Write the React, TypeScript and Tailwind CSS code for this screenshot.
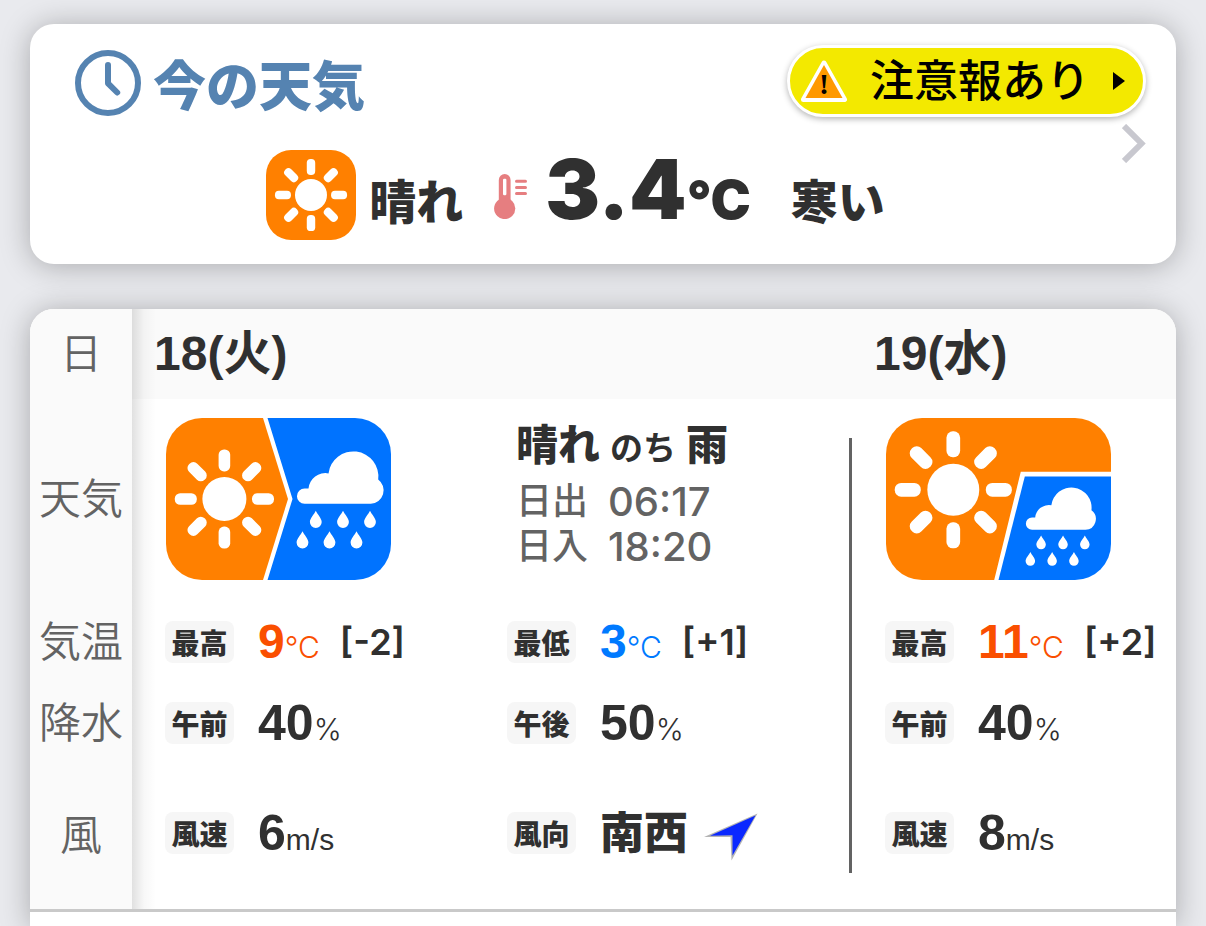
import type { ReactNode } from "react";

const JP = "font-['Noto_Sans_CJK_JP',sans-serif]";
const HELV = "font-['Liberation_Sans','Noto_Sans_CJK_JP',sans-serif]";
const INTER = "font-['Inter','Noto_Sans_CJK_JP',sans-serif]";

const RAY_ANGLES = [0, 45, 90, 135, 180, 225, 270, 315];
const DROPS = [
  [149.8, 92.8],
  [177, 92.8],
  [204, 92.8],
  [136.5, 113.2],
  [163.5, 113.2],
  [190.5, 113.2],
];

function Sun({ x, y, scale }: { x: number; y: number; scale: number }) {
  return (
    <g transform={`translate(${x} ${y}) scale(${scale})`}>
      <circle r="22" fill="#fff" />
      {RAY_ANGLES.map((angle) => (
        <rect
          key={angle}
          x="-5.8"
          y="-49.6"
          width="11.6"
          height="22"
          rx="5.4"
          fill="#fff"
          transform={`rotate(${angle})`}
        />
      ))}
    </g>
  );
}

function RainCloud({ transform }: { transform?: string }) {
  return (
    <g transform={transform} fill="#fff">
      <path d="M138.6 70.5H142.5A17 17 0 0 1 162.5 55.4A25 25 0 1 1 212.2 61.5A13.5 13.5 0 0 1 204.8 85.8H138.6A7.65 7.65 0 0 1 138.6 70.5Z" />
      {DROPS.map(([x, y]) => (
        <path
          key={`${x}-${y}`}
          transform={`translate(${x} ${y})`}
          d="M0 0C1.5 3.4 5.9 7.5 5.9 11.3A5.9 5.9 0 0 1-5.9 11.3C-5.9 7.5-1.5 3.4 0 0Z"
        />
      ))}
    </g>
  );
}

function SunnyIcon() {
  return (
    <svg viewBox="0 0 90 90" className="size-[90px] shrink-0" aria-hidden="true">
      <rect width="90" height="90" rx="25" fill="#ff8000" />
      <Sun x={45} y={45} scale={0.727} />
    </svg>
  );
}

function SunThenRainIcon() {
  return (
    <svg viewBox="0 0 225 162" className="h-[162px] w-[225px] shrink-0 rounded-[36px]" aria-hidden="true">
      <path d="M0 0H97L122 81L97 162H0Z" fill="#ff8000" />
      <path d="M101.5 0H225V162H101.5L126.5 81Z" fill="#0073ff" />
      <Sun x={58.4} y={81} scale={1} />
      <RainCloud />
    </svg>
  );
}

function SunBrieflyRainIcon() {
  return (
    <svg viewBox="0 0 225 162" className="h-[162px] w-[225px] shrink-0 rounded-[36px]" aria-hidden="true">
      <path d="M0 0H225V53.8H134.8L108.2 162H0Z" fill="#ff8000" />
      <path d="M138.8 58.5H225V162H112.5Z" fill="#0073ff" />
      <Sun x={67.3} y={71.8} scale={1.18} />
      <RainCloud transform="translate(34.2 42.6) scale(0.807)" />
    </svg>
  );
}

function ClockIcon() {
  return (
    <svg viewBox="0 0 66 66" className="size-[66px] shrink-0" fill="none" stroke="#5583b1" aria-hidden="true">
      <circle cx="33" cy="33" r="30" strokeWidth="6" />
      <path d="M33 15V33.3L42.2 42.5" strokeWidth="6" strokeLinecap="round" strokeLinejoin="round" />
    </svg>
  );
}

function ThermometerIcon() {
  return (
    <svg viewBox="0 0 33 45" className="h-[45px] w-[33px] shrink-0" aria-hidden="true">
      <g fill="#e67e80">
        <rect x="4.8" width="11.8" height="36" rx="5.9" />
        <circle cx="10.7" cy="34.5" r="10.6" />
      </g>
      <rect x="9" y="4.8" width="3.4" height="16.4" rx="1.2" fill="#fff" />
      <path d="M22.5 7.3H31.5M22.5 13.4H31.5M22.5 19.5H31.5" stroke="#e67e80" strokeWidth="3" strokeLinecap="round" />
    </svg>
  );
}

function WarningIcon() {
  return (
    <svg viewBox="0 0 48 45" className="h-[45px] w-[48px] shrink-0" aria-hidden="true">
      <path d="M24 4L44.5 40.5H3.5Z" fill="#ff9900" stroke="#fff" strokeWidth="5" strokeLinejoin="round" />
      <path d="M24 6L42.5 39H5.5Z" fill="#ff9900" />
      <text
        x="24"
        y="35"
        textAnchor="middle"
        className="font-['Liberation_Serif',serif] text-[30px] font-bold"
        fill="#000"
      >
        !
      </text>
    </svg>
  );
}

function WindArrow() {
  return (
    <svg viewBox="0 0 54 48" className="mt-2 h-[48px] w-[54px] shrink-0" aria-hidden="true">
      <path d="M53.5 0.5L27.5 47.5L26.5 24L0 24Z" fill="#b4b4b4" />
      <path d="M51.5 2.5L28.5 42.5V22.3L6 22.8Z" fill="#0a28ff" />
    </svg>
  );
}

function Chip({ children }: { children: ReactNode }) {
  return (
    <span
      className={`${JP} mr-6 flex h-[42px] w-[69px] shrink-0 items-center justify-center rounded-lg bg-[#f6f6f6] text-[28px] leading-none font-black`}
    >
      {children}
    </span>
  );
}

function Temperature({ label, value, diff, tone }: { label: string; value: string; diff: string; tone: string }) {
  return (
    <div className="flex items-center">
      <Chip>{label}</Chip>
      <div className="flex items-baseline leading-none whitespace-nowrap">
        <span className={`${HELV} ${tone} text-[48px] font-bold`}>{value}</span>
        <span className={`${INTER} ${tone} text-[30px] font-light`}>°C</span>
      </div>
      <span className={`${INTER} ml-5 text-[36px] leading-none font-semibold`}>{diff}</span>
    </div>
  );
}

function Reading({ label, value, unit, unitStyle }: { label: string; value: string; unit: string; unitStyle: string }) {
  return (
    <div className="flex items-center">
      <Chip>{label}</Chip>
      <div className="flex items-baseline leading-none">
        <span className={`${HELV} text-[50px] font-bold`}>{value}</span>
        <span className={unitStyle}>{unit}</span>
      </div>
    </div>
  );
}

const PERCENT = "font-['Inter',sans-serif] text-[30px] font-light";
const SPEED = "font-['Liberation_Sans',sans-serif] text-[30px]";
const SPLIT = "grid grid-cols-[342px_1fr] items-center border-r-3 border-[#636363] pl-[33px]";
const CARD_SHADOW = "shadow-[0_2px_30px_rgba(0,0,0,0.28)]";

function RowHeader({ children }: { children: ReactNode }) {
  return (
    <th scope="row" className="bg-[#fafafa] p-0 text-center text-[42px] leading-none font-[350] text-[#636363]">
      {children}
    </th>
  );
}

function SunTime({ label, time }: { label: string; time: string }) {
  return (
    <p className="flex items-center gap-5 text-[36px] leading-[45px] font-medium text-[#636363]">
      {label} <span className="text-[40px]">{time}</span>
    </p>
  );
}

export default function App() {
  return (
    <main
      className={`${INTER} flex min-h-screen flex-col gap-[45px] overflow-hidden bg-[#e9eaee] px-[30px] pt-6 text-[#303030]`}
    >
      <section className={`${CARD_SHADOW} rounded-3xl bg-white pt-[21px] pb-6`}>
        <div className="flex h-[105px] items-start justify-between pr-[30px] pl-[45px]">
          <h1
            className={`${JP} flex items-center gap-3 pt-[5px] text-[53px] leading-none font-black text-[#5583b1]`}
          >
            <ClockIcon />
            今の天気
          </h1>
          <div className="flex flex-col items-end gap-[7px]">
            <button
              type="button"
              className="flex h-[72px] items-center rounded-full border-3 border-white bg-[#f3e900] pr-[18px] pl-[10px] text-[44px] leading-none font-medium text-black shadow-[0_2px_6px_rgba(0,0,0,0.3)]"
            >
              <WarningIcon />
              <span className="mr-[23px] ml-[22px]">注意報あり</span>
              <svg viewBox="0 0 12 18" className="h-[18px] w-[12px]" aria-hidden="true">
                <path d="M0 0L12 9L0 18Z" />
              </svg>
            </button>
            <a href="#details" aria-label="詳細">
              <svg viewBox="0 0 24 39" className="h-[39px] w-[24px]" fill="none" aria-hidden="true">
                <path d="M2 2L19.5 19.5L2 37" stroke="#c8c8cf" strokeWidth="6" />
              </svg>
            </a>
          </div>
        </div>
        <div className="flex h-[90px] items-center justify-center pr-[55px]">
          <SunnyIcon />
          <div className="ml-[13px] flex items-baseline pb-[10px] leading-none whitespace-nowrap">
            <span className="text-[47px] font-black">晴れ</span>
            <span className="mr-[18px] ml-[31px]">
              <ThermometerIcon />
            </span>
            <span className="text-[82px] font-black">3.4</span>
            <span className="text-[54px] font-black">°C</span>
            <span className="ml-10 text-[47px] font-black">寒い</span>
          </div>
        </div>
      </section>

      <section className={`${CARD_SHADOW} relative flex-1 overflow-hidden rounded-t-3xl bg-white`}>
        <table className="w-full table-fixed border-collapse">
          <colgroup>
            <col className="w-[102px]" />
            <col className="w-[720px]" />
            <col />
          </colgroup>
          <tbody>
            <tr className="h-[90px] bg-[#fafafa]">
              <RowHeader>日</RowHeader>
              <th scope="col" className={`${HELV} p-0 pl-[22px] text-left text-[48px] leading-none font-bold`}>
                18(火)
              </th>
              <th scope="col" className={`${HELV} p-0 pl-[22px] text-left text-[48px] leading-none font-bold`}>
                19(水)
              </th>
            </tr>
            <tr className="h-[200px]">
              <RowHeader>天気</RowHeader>
              <td className="p-0 align-bottom">
                <div className={`${SPLIT} h-[161px]`}>
                  <div className="-mt-10 pl-px">
                    <SunThenRainIcon />
                  </div>
                  <div className="-mt-[50px] pl-[9px] whitespace-nowrap">
                    <p className="flex items-baseline gap-[10px] pb-1 text-[42px] leading-[54px] font-black">
                      晴れ <span className="text-[33px] font-bold">のち</span> 雨
                    </p>
                    <SunTime label="日出" time="06:17" />
                    <SunTime label="日入" time="18:20" />
                  </div>
                </div>
              </td>
              <td className="p-0 pl-[34px]">
                <SunBrieflyRainIcon />
              </td>
            </tr>
            <tr className="h-[86px]">
              <RowHeader>気温</RowHeader>
              <td className="p-0">
                <div className={`${SPLIT} h-[86px]`}>
                  <Temperature label="最高" value="9" diff="[-2]" tone="text-[#fa4f00]" />
                  <Temperature label="最低" value="3" diff="[+1]" tone="text-[#007aff]" />
                </div>
              </td>
              <td className="p-0 pl-[33px]">
                <Temperature label="最高" value="11" diff="[+2]" tone="text-[#fa4f00]" />
              </td>
            </tr>
            <tr className="h-[76px]">
              <RowHeader>降水</RowHeader>
              <td className="p-0">
                <div className={`${SPLIT} h-[76px]`}>
                  <Reading label="午前" value="40" unit="%" unitStyle={PERCENT} />
                  <Reading label="午後" value="50" unit="%" unitStyle={PERCENT} />
                </div>
              </td>
              <td className="p-0 pl-[33px]">
                <Reading label="午前" value="40" unit="%" unitStyle={PERCENT} />
              </td>
            </tr>
            <tr className="h-[148px]">
              <RowHeader>風</RowHeader>
              <td className="p-0 align-top">
                <div className={`${SPLIT} h-[112px] pt-8`}>
                  <Reading label="風速" value="6" unit="m/s" unitStyle={SPEED} />
                  <div className="flex items-center">
                    <Chip>風向</Chip>
                    <span className="mr-4 text-[44px] leading-none font-black">南西</span>
                    <WindArrow />
                  </div>
                </div>
              </td>
              <td className="p-0 pb-1 pl-[33px]">
                <Reading label="風速" value="8" unit="m/s" unitStyle={SPEED} />
              </td>
            </tr>
          </tbody>
        </table>
        <hr className="border-t-3 border-[#c9c9c9]" />
        <div className="pointer-events-none absolute top-0 left-[102px] h-[600px] w-6 bg-linear-to-r from-black/12 via-black/3 to-transparent" />
      </section>
    </main>
  );
}
